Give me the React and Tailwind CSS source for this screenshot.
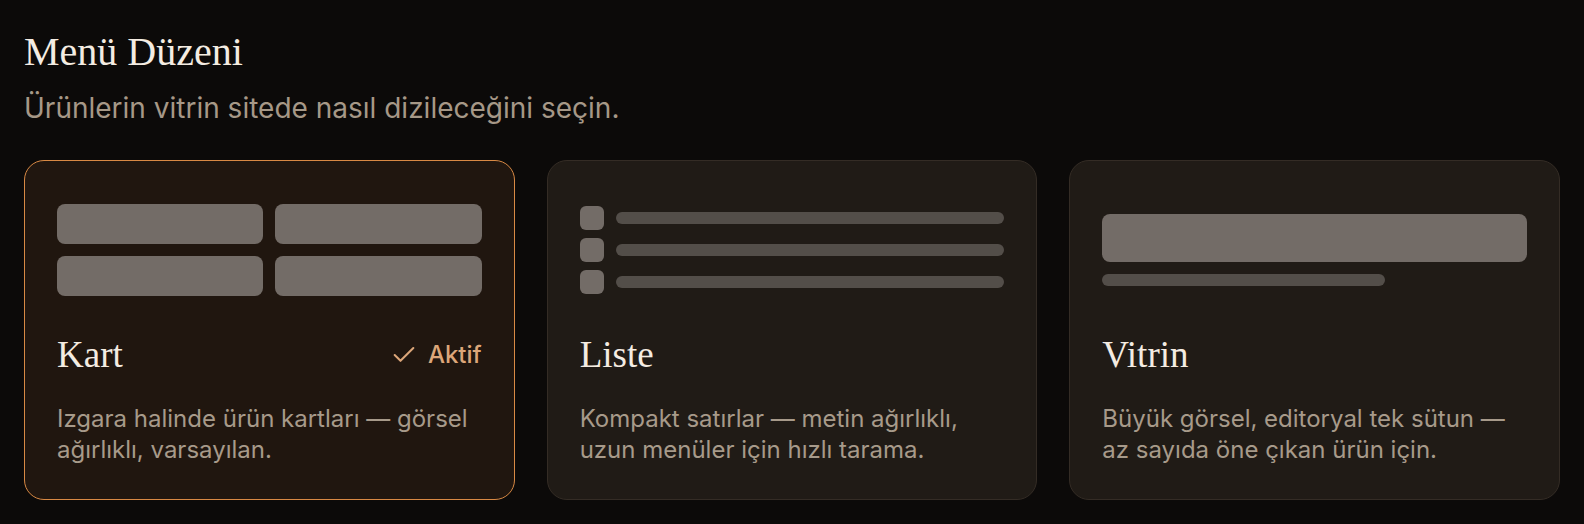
import React from "react";
import { Check } from "lucide-react";

const serif = { fontFamily: '"Liberation Serif", "Times New Roman", serif' };

const layouts = [
  {
    id: "kart",
    title: "Kart",
    desc: "Izgara halinde ürün kartları — görsel ağırlıklı, varsayılan.",
  },
  {
    id: "liste",
    title: "Liste",
    desc: "Kompakt satırlar — metin ağırlıklı, uzun menüler için hızlı tarama.",
  },
  {
    id: "vitrin",
    title: "Vitrin",
    desc: "Büyük görsel, editoryal tek sütun — az sayıda öne çıkan ürün için.",
  },
];

// small wireframe drawn at the top of each option
const Preview = ({ id }) => {
  if (id === "kart") {
    return (
      <div className="grid w-full grid-cols-2 gap-3">
        {[0, 1, 2, 3].map((i) => (
          <div key={i} className="h-10 rounded-lg bg-[#736c67]" />
        ))}
      </div>
    );
  }
  if (id === "liste") {
    return (
      <div className="flex w-full flex-col gap-2">
        {[0, 1, 2].map((i) => (
          <div key={i} className="flex items-center gap-3">
            <div className="h-6 w-6 shrink-0 rounded-md bg-[#736c67]" />
            <div className="h-3 flex-1 rounded-full bg-[#534e49]" />
          </div>
        ))}
      </div>
    );
  }
  return (
    <div className="flex w-full flex-col gap-3">
      <div className="h-12 rounded-lg bg-[#736c67]" />
      <div className="h-3 w-2/3 rounded-full bg-[#534e49]" />
    </div>
  );
};

const LayoutOption = ({ item, active }) => (
  <div
    className={
      active
        ? "rounded-[20px] border border-[#d88944] bg-[#20160f] px-8 pt-8 pb-[34px]"
        : "rounded-[20px] border border-[#342c25] bg-[#201b16] px-8 pt-8 pb-[34px]"
    }
  >
    <div className="flex h-[114px] items-center">
      <Preview id={item.id} />
    </div>
    <div className="mt-[27px] flex items-center justify-between">
      <h3 className="text-[37px] leading-[42px] text-[#f4ece2]" style={serif}>
        {item.title}
      </h3>
      {active && (
        <span className="flex items-center gap-2.5 text-[24px] font-medium text-[#dca679]">
          <Check size={28} strokeWidth={1.75} />
          Aktif
        </span>
      )}
    </div>
    <p className="mt-[27px] text-[24px] leading-[31px] text-[#a79a8a]">{item.desc}</p>
  </div>
);

export default function App() {
  return (
    <div
      className="min-h-screen bg-[#0c0a09] px-6 pt-[28px] pb-6"
      style={{ fontFamily: "Inter, 'Liberation Sans', sans-serif" }}
    >
      <h1 className="text-[40px] leading-[48px] text-[#f4ece2]" style={serif}>
        Menü Düzeni
      </h1>
      <p className="mt-4 text-[28px] leading-8 text-[#a69887]">
        Ürünlerin vitrin sitede nasıl dizileceğini seçin.
      </p>
      <div className="mt-9 grid grid-cols-3 gap-8">
        {layouts.map((item) => (
          <LayoutOption key={item.id} item={item} active={item.id === "kart"} />
        ))}
      </div>
    </div>
  );
}
